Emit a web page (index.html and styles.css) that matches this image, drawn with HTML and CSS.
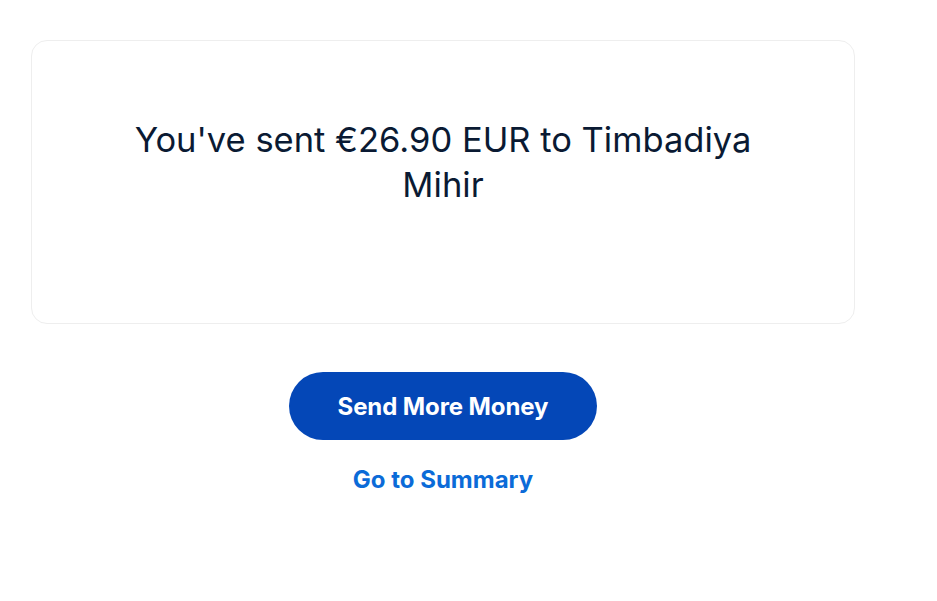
FILE: index.html
```html
<!DOCTYPE html>
<html lang="en">
<head>
<meta charset="utf-8">
<title>Payment sent</title>
<link rel="stylesheet" href="styles.css">
</head>
<body>
<main class="page">
  <section class="card">
    <h1 class="message">You've sent €26.90 EUR to Timbadiya Mihir</h1>
  </section>
  <div class="actions">
    <button class="btn-primary" type="button">Send More Money</button>
    <a class="link" href="#">Go to Summary</a>
  </div>
</main>
</body>
</html>
```
FILE: styles.css
```css
* { box-sizing: border-box; }
html, body { margin: 0; padding: 0; background: #ffffff; }
body { font-family: Inter, "Liberation Sans", sans-serif; }
.page {
  width: 824px;
  margin-left: 31px;
  padding-top: 40px;
  display: flex;
  flex-direction: column;
  align-items: center;
}
.card {
  width: 100%;
  height: 284px;
  border: 1px solid #eeeeee;
  border-radius: 16px;
  padding: 76px 80px 0;
  display: flex;
  justify-content: center;
}
.message {
  margin: 0;
  font-weight: 400;
  font-size: 34.5px;
  line-height: 45px;
  color: #0a1a33;
  text-align: center;
}
.actions {
  margin-top: 48px;
  display: flex;
  flex-direction: column;
  align-items: center;
}
.btn-primary {
  width: 308px;
  height: 68px;
  border: none;
  border-radius: 34px;
  background: #0447b7;
  color: #ffffff;
  font-family: Inter, "Liberation Sans", sans-serif;
  font-weight: 700;
  font-size: 24px;
  letter-spacing: -0.1px;
}
.link {
  margin-top: 25px;
  color: #0b6bd8;
  font-weight: 700;
  font-size: 24px;
  text-decoration: none;
}
```
